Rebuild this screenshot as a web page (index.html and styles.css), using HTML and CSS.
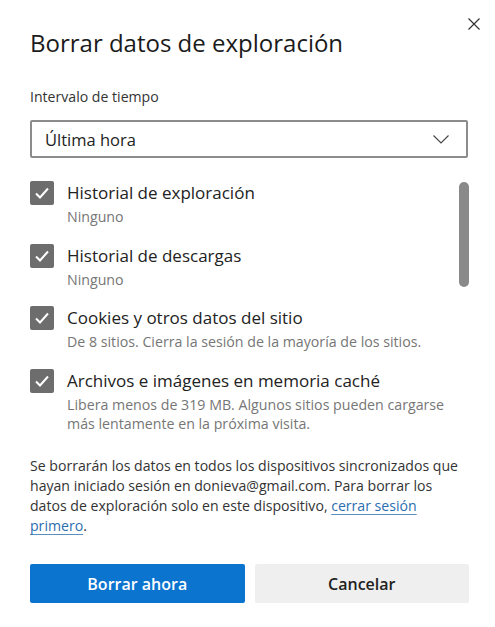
FILE: index.html
```html
<!DOCTYPE html>
<html lang="es">
<head>
<meta charset="utf-8">
<title>Borrar datos de exploración</title>
<link rel="stylesheet" href="styles.css">
</head>
<body>
<div class="dialog">
  <div class="header">
    <h1 class="title">Borrar datos de exploración</h1>
    <button class="close" aria-label="Cerrar">
      <svg width="12" height="12" viewBox="0 0 12 12"><path d="M0.5 0.5L11.5 11.5M11.5 0.5L0.5 11.5" stroke="#333" stroke-width="1.2" fill="none"/></svg>
    </button>
  </div>
  <div class="field-label">Intervalo de tiempo</div>
  <div class="select">
    <span>Última hora</span>
    <svg width="16" height="9" viewBox="0 0 16 9"><path d="M0.5 0.5L8 8L15.5 0.5" stroke="#444" stroke-width="1.1" fill="none"/></svg>
  </div>
  <div class="list-wrap">
    <div class="list">
      <div class="item">
        <span class="check"><svg width="24" height="24" viewBox="0 0 24 24"><path d="M6 12.5L10 16.5L18 7.5" stroke="#fff" stroke-width="2" fill="none"/></svg></span>
        <div class="item-text"><div class="item-title">Historial de exploración</div><div class="item-sub">Ninguno</div></div>
      </div>
      <div class="item">
        <span class="check"><svg width="24" height="24" viewBox="0 0 24 24"><path d="M6 12.5L10 16.5L18 7.5" stroke="#fff" stroke-width="2" fill="none"/></svg></span>
        <div class="item-text"><div class="item-title">Historial de descargas</div><div class="item-sub">Ninguno</div></div>
      </div>
      <div class="item">
        <span class="check"><svg width="24" height="24" viewBox="0 0 24 24"><path d="M6 12.5L10 16.5L18 7.5" stroke="#fff" stroke-width="2" fill="none"/></svg></span>
        <div class="item-text"><div class="item-title">Cookies y otros datos del sitio</div><div class="item-sub">De 8 sitios. Cierra la sesión de la mayoría de los sitios.</div></div>
      </div>
      <div class="item">
        <span class="check"><svg width="24" height="24" viewBox="0 0 24 24"><path d="M6 12.5L10 16.5L18 7.5" stroke="#fff" stroke-width="2" fill="none"/></svg></span>
        <div class="item-text"><div class="item-title">Archivos e imágenes en memoria caché</div><div class="item-sub">Libera menos de 319 MB. Algunos sitios pueden cargarse más lentamente en la próxima visita.</div></div>
      </div>
    </div>
    <div class="scrollbar"><div class="thumb"></div></div>
  </div>
  <p class="note">Se borrarán los datos en todos los dispositivos sincronizados que hayan iniciado sesión en donieva@gmail.com. Para borrar los datos de exploración solo en este dispositivo, <a href="#">cerrar sesión primero</a>.</p>
  <div class="buttons">
    <button class="btn primary">Borrar ahora</button>
    <button class="btn secondary">Cancelar</button>
  </div>
</div>
</body>
</html>
```
FILE: styles.css
```css
* { box-sizing: border-box; }
html, body { margin: 0; background: #fff; }
body { font-family: "Open Sans", "Noto Sans", sans-serif; color: #1f1f1f; }
.dialog { width: 495px; padding: 18px 15px 0 30px; }
.header { display: flex; justify-content: space-between; align-items: flex-start; }
.title { margin: 9px 0 0; font-size: 24px; font-weight: 400; line-height: 32px; color: #1b1b1b; }
.close { border: 0; background: none; padding: 0; margin: 0; width: 12px; height: 12px; display: flex; }
.field-label { margin-top: 28px; font-size: 14.1px; line-height: 20px; color: #333; margin-right: 12px; }
.select { margin-top: 13px; margin-right: 12px; height: 38px; border: 2px solid #8c8c8c; border-radius: 2px; display: flex; align-items: center; justify-content: space-between; padding: 0 17px 0 13px; font-size: 16.5px; color: #222; }
.list-wrap { display: flex; margin-top: 14px; height: 260px; overflow: hidden; margin-right: 11px; }
.list { flex: 1; padding-top: 9px; display: flex; flex-direction: column; gap: 17px; }
.item { display: flex; gap: 13px; align-items: flex-start; }
.check { flex: 0 0 24px; width: 24px; height: 24px; background: #6d6d6d; border-radius: 2px; display: flex; }
.item-title { font-size: 17px; line-height: 24px; color: #222; }
.item-sub { margin-top: 2px; font-size: 14.2px; line-height: 19.5px; color: #767676; }
.scrollbar { width: 10px; padding-top: 10px; }
.thumb { width: 10px; height: 105px; background: #8a8a8a; border-radius: 5px; }
.note { margin: 24px 12px 0 0; font-size: 14.1px; line-height: 20px; color: #333; }
.note a { color: #2a6eb0; text-decoration: underline; text-decoration-color: #5a8dc0; text-underline-offset: 3px; }
.buttons { display: flex; gap: 10px; margin-top: 28px; margin-right: 11px; }
.btn { flex: 1; height: 39px; border: 0; border-radius: 2px; font-family: inherit; font-size: 16px; font-weight: 600; }
.primary { background: #0a74cf; color: #fff; }
.secondary { background: #efefef; color: #222; }
```
